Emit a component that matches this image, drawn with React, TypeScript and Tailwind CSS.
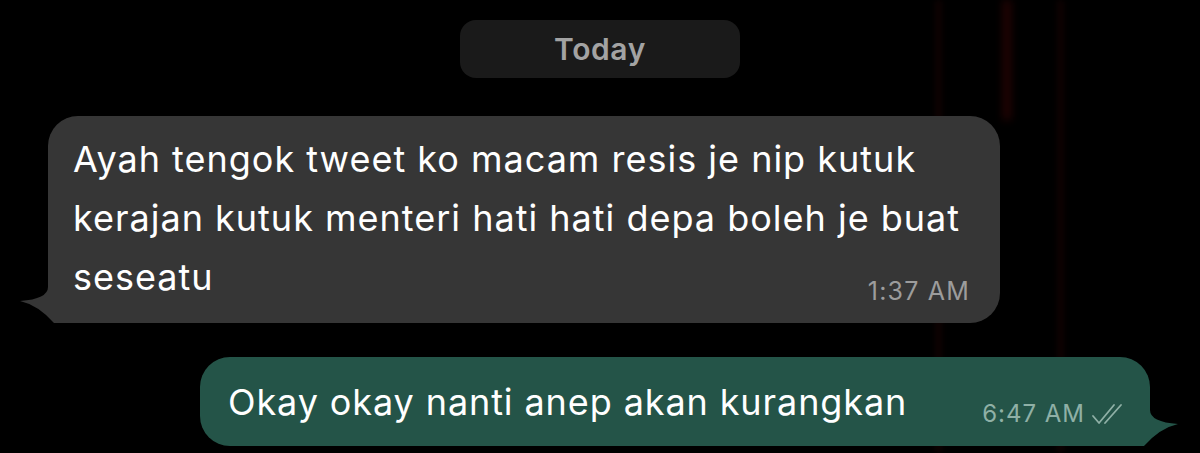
import React from "react";

const font = { fontFamily: "Inter, 'Liberation Sans', sans-serif" };

function DoubleCheck() {
  return (
    <svg width="36" height="24" viewBox="0 0 36 24" fill="none" stroke="#8fb0a6" strokeWidth="1.8" strokeLinecap="round" strokeLinejoin="round">
      <path d="M3 14 L9 21 L24 3" />
      <path d="M15 21 L31 3" />
    </svg>
  );
}

export default function App() {
  return (
    <div className="relative w-[1200px] h-[453px] overflow-hidden bg-black" style={font}>
      {/* faint red streaks in the wallpaper */}
      <div className="pointer-events-none absolute left-[936px] top-0 h-[453px] w-[5px] bg-[#2a0505] opacity-50 blur-[3px]" />
      <div className="pointer-events-none absolute left-[1003px] top-0 h-[120px] w-[8px] bg-[#4a0808] opacity-50 blur-[4px]" />
      <div className="pointer-events-none absolute left-[1058px] top-0 h-[453px] w-[5px] bg-[#2a0505] opacity-50 blur-[3px]" />

      <div className="relative flex flex-col">
        <div className="flex justify-center pt-[20px]">
          <div className="flex h-[58px] w-[280px] items-center justify-center rounded-[16px] bg-[#1a1a1a]">
            <span className="text-[30px] font-semibold tracking-[0.6px] text-[#a3a3a3]">Today</span>
          </div>
        </div>

        <div className="relative ml-[48px] mt-[38px] w-[952px] rounded-[30px] rounded-bl-[12px] bg-[#363636] pl-[25px] pr-[30px] pt-[14px] pb-[16px]">
          <svg className="absolute left-[-28px] bottom-0" width="44" height="46" viewBox="0 0 44 46">
            <path d="M28 0 L28 10 Q28 22 0 24 Q18 28 34 46 L44 46 L44 0 Z" fill="#363636" />
          </svg>
          <p className="text-[36px] leading-[59px] tracking-[1px] text-white">
            Ayah tengok tweet ko macam resis je nip kutuk
            <br />
            kerajan kutuk menteri hati hati depa boleh je buat
            <br />
            seseatu
          </p>
          <span className="absolute right-[30px] bottom-[13px] text-[25px] tracking-[1.2px] text-[#9c9c9c]">1:37 AM</span>
        </div>

        <div className="relative ml-[200px] mt-[34px] flex h-[89px] w-[950px] items-center rounded-[30px] rounded-br-[12px] bg-[#245448] pl-[28px] pr-[24px]">
          <svg className="absolute right-[-28px] bottom-0" width="44" height="46" viewBox="0 0 44 46">
            <path d="M16 0 L16 10 Q16 22 44 24 Q26 28 10 46 L0 46 L0 0 Z" fill="#245448" />
          </svg>
          <p className="text-[36px] tracking-[0.9px] text-white">Okay okay nanti anep akan kurangkan</p>
          <div className="ml-auto mt-[24px] flex items-center gap-[5px]">
            <span className="text-[24px] tracking-[1px] text-[#8fb0a6]">6:47 AM</span>
            <DoubleCheck />
          </div>
        </div>
      </div>
    </div>
  );
}
